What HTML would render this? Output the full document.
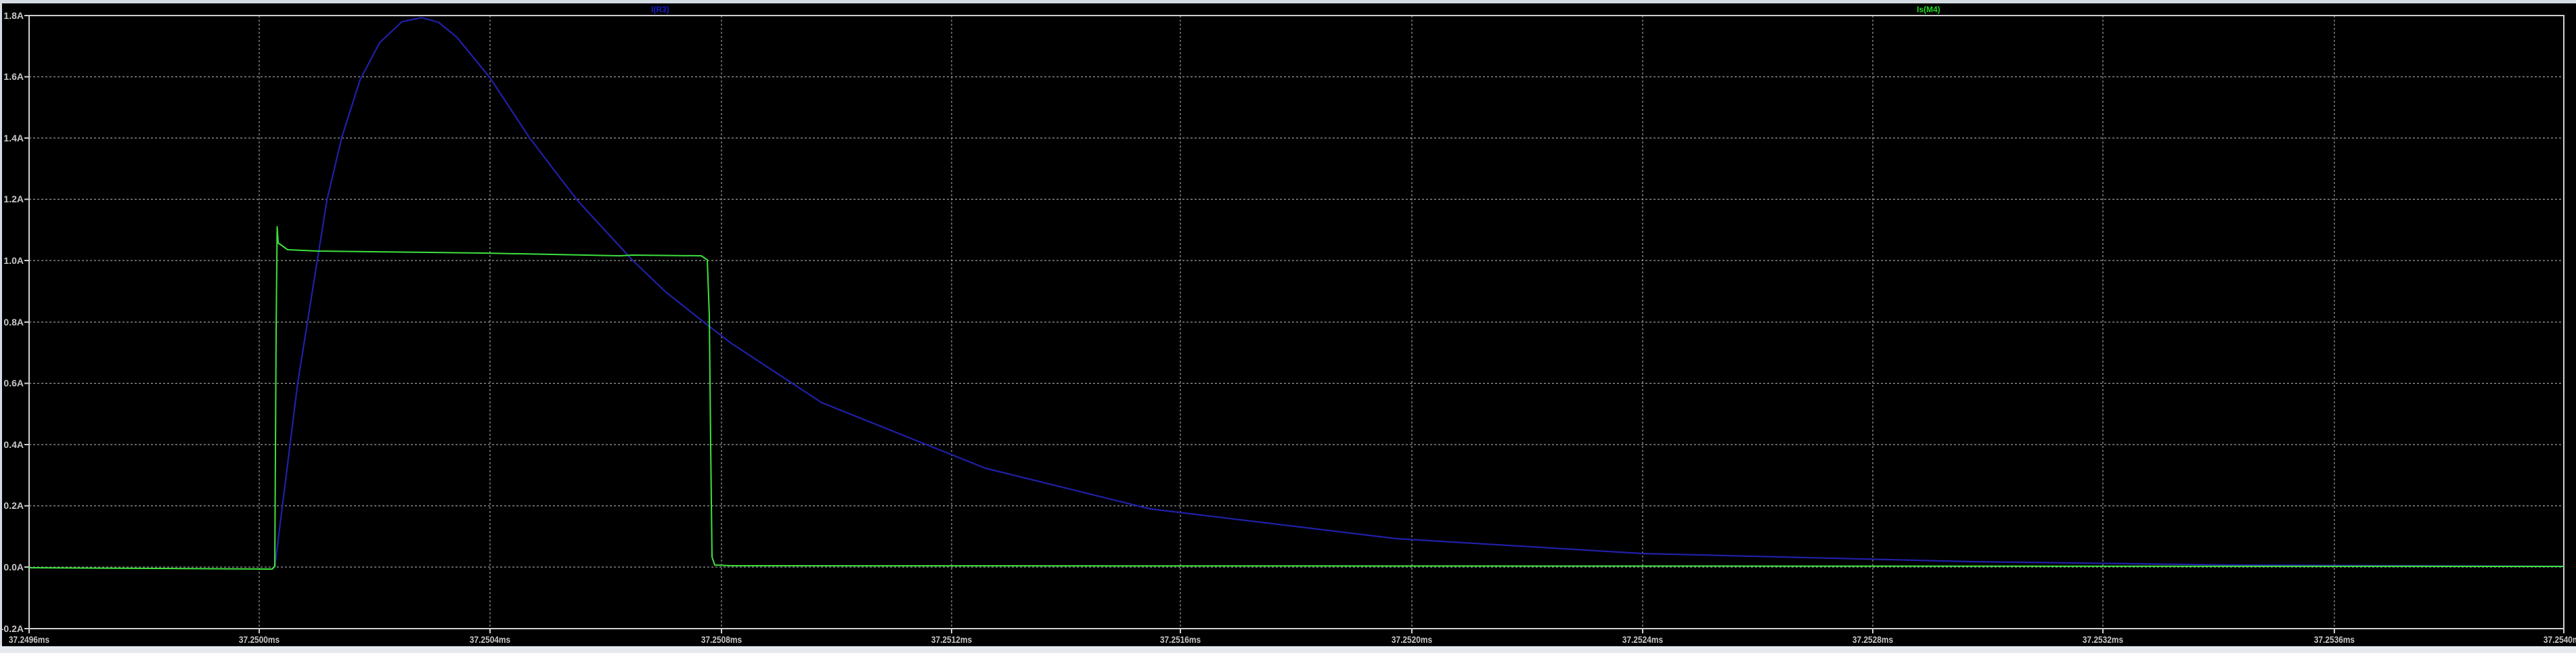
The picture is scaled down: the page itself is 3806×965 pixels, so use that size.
<!DOCTYPE html>
<html><head><style>
html,body{margin:0;padding:0;background:#d4dbe3;width:3806px;height:965px;overflow:hidden}
svg{position:absolute;left:0;top:0}
text{font-family:"Liberation Sans",sans-serif;font-size:14px;fill:#c8c8c8;font-weight:bold}
</style></head><body>
<svg width="3806" height="965" viewBox="0 0 3806 965">
<rect x="0" y="0" width="3806" height="965" fill="#d4dbe3"/>
<rect x="0" y="953" width="3806" height="12" fill="#e6eaef"/>
<rect x="3" y="5" width="3803" height="950" fill="#000"/>
<g stroke="#9a9a9a" stroke-width="1.2" stroke-dasharray="3,3" fill="none">
<path d="M383 23V929M724 23V929M1066 23V929M1406 23V929M1744 23V929M2086 23V929M2427 23V929M2767 23V929M3107 23V929M3449 23V929"/>
<path d="M43 113.5H3788M43 204H3788M43 294.5H3788M43 385H3788M43 476H3788M43 566.5H3788M43 657H3788M43 747.5H3788M43 838H3788"/>
</g>
<g stroke="#cfcfcf" stroke-width="2" fill="none">
<path d="M43 23H3788V929H43Z"/>
<path d="M36 23H43M36 113.5H43M36 204H43M36 294.5H43M36 385H43M36 476H43M36 566.5H43M36 657H43M36 747.5H43M36 838H43M36 929H43"/>
<path d="M43 929V936M383 929V936M724 929V936M1066 929V936M1406 929V936M1744 929V936M2086 929V936M2427 929V936M2767 929V936M3107 929V936M3449 929V936M3788 929V936"/>
</g>
<g text-anchor="end">
<text x="35" y="28">1.8A</text><text x="35" y="118">1.6A</text><text x="35" y="209">1.4A</text>
<text x="35" y="299">1.2A</text><text x="35" y="390">1.0A</text><text x="35" y="481">0.8A</text>
<text x="35" y="571">0.6A</text><text x="35" y="662">0.4A</text><text x="35" y="752">0.2A</text>
<text x="35" y="843">0.0A</text><text x="35" y="934">-0.2A</text>
</g>
<g text-anchor="middle" transform="scale(0.85,1)">
<text x="50.6" y="950" text-anchor="middle">37.2496ms</text>
<text x="450.6" y="950">37.2500ms</text>
<text x="851.8" y="950">37.2504ms</text>
<text x="1254.1" y="950">37.2508ms</text>
<text x="1654.1" y="950">37.2512ms</text>
<text x="2051.8" y="950">37.2516ms</text>
<text x="2454.1" y="950">37.2520ms</text>
<text x="2855.3" y="950">37.2524ms</text>
<text x="3255.3" y="950">37.2528ms</text>
<text x="3655.3" y="950">37.2532ms</text>
<text x="4057.6" y="950">37.2536ms</text>
<text x="4456.5" y="950">37.2540ms</text>
</g>
<text x="962" y="18" style="fill:#1a1acc;font-size:12px">I(R3)</text>
<text x="2832" y="18" style="fill:#22dd22;font-size:12px">Is(M4)</text>
<polyline fill="none" stroke="#2020a8" stroke-width="2.2" stroke-linejoin="round" points="406,838 440,565 483,296 505,203 532,118 561,63 594,32 623,26 648,33 675,55 724,115 782,203 813,244 853,296 934,384 983,431 1041,477 1080,507 1214,595 1456,692 1699,752 2063,796 2427,818 2912,830 3300,835 3788,837"/>
<polyline fill="none" stroke="#3ee03e" stroke-width="2" stroke-linejoin="round" points="43,839 402,841 406,837 408,488 409.5,335 411,359 425,369 469,371 715,374 916,378 934,377 1036,378 1045,384 1048,466 1050,658 1052,823 1056,835 1080,836 3788,837"/>
</svg>
</body></html>
